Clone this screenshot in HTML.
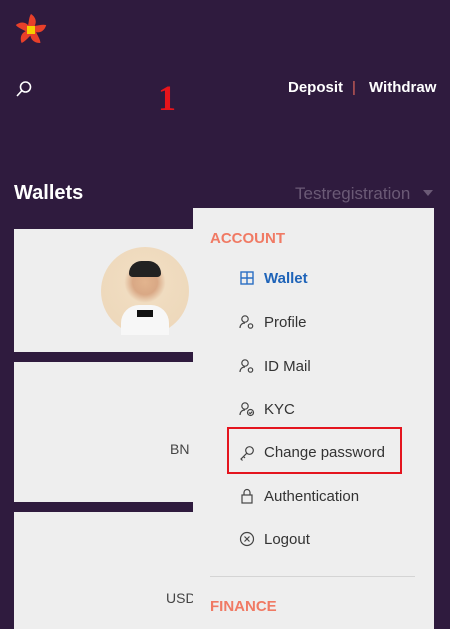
<!DOCTYPE html>
<html><head><style>
*{margin:0;padding:0;box-sizing:border-box}
html,body{width:450px;height:629px;overflow:hidden}
body{background:#2f1b3e;font-family:"Liberation Sans",sans-serif;position:relative}
.a{position:absolute}
.card{position:absolute;left:14px;width:200px;background:#eeeeee}
.menu{position:absolute;left:193px;top:208px;width:241px;height:421px;background:#eeeeee}
.it{position:absolute;left:71px;font-size:15px;color:#333;line-height:18px}
.ic{position:absolute;left:46px;width:16px;height:16px}
.hd{position:absolute;left:17px;font-size:15px;font-weight:bold;color:#f07a64}
</style></head><body>
<svg class="a" style="left:13px;top:12px" width="36" height="36" viewBox="0 0 36 36">
<g transform="translate(18,18)" fill="#e8402a">
<path d="M0-16 C6-12 6-6 2-2 L-3-4 C-2-9 -2-13 0-16Z"/>
<path transform="rotate(72)" d="M0-16 C6-12 6-6 2-2 L-3-4 C-2-9 -2-13 0-16Z"/>
<path transform="rotate(144)" d="M0-16 C6-12 6-6 2-2 L-3-4 C-2-9 -2-13 0-16Z"/>
<path transform="rotate(216)" d="M0-16 C6-12 6-6 2-2 L-3-4 C-2-9 -2-13 0-16Z"/>
<path transform="rotate(288)" d="M0-16 C6-12 6-6 2-2 L-3-4 C-2-9 -2-13 0-16Z"/>
<rect x="-4" y="-4" width="8" height="8" fill="#f5d000"/>
</g></svg>
<svg class="a" style="left:15px;top:80px" width="18" height="18" viewBox="0 0 18 18" fill="none" stroke="#fff" stroke-width="1.6"><circle cx="10.5" cy="7" r="5"/><path d="M7 10.5L2 16"/></svg>
<div class="a" style="left:158px;top:80px;color:#e8141b;font-size:36px;font-weight:bold;line-height:36px;font-family:'Liberation Serif',serif">1</div>
<div class="a" style="left:288px;top:79px;color:#fff;font-size:15px;font-weight:bold">Deposit</div>
<div class="a" style="left:352px;top:79px;color:#d9645a;font-size:15px">|</div>
<div class="a" style="left:369px;top:79px;color:#fff;font-size:15px;font-weight:bold">Withdraw</div>
<div class="a" style="left:14px;top:182px;color:#fff;font-size:20px;font-weight:bold">Wallets</div>
<div class="a" style="left:295px;top:184px;color:#6b5a76;font-size:17px">Testregistration</div>
<div class="a" style="left:423px;top:190px;border-left:5px solid transparent;border-right:5px solid transparent;border-top:6px solid #6b5a76"></div>
<div class="card" style="top:229px;height:123px"></div>
<div class="a" style="left:101px;top:247px;width:88px;height:88px;border-radius:50%;background:radial-gradient(circle at 50% 40%,#e2b48e 0,#d9a885 18%,#f0dcc0 30%,#ecd6b8 100%)"><div style="position:absolute;left:28px;top:14px;width:32px;height:16px;background:#222;border-radius:14px 14px 4px 4px"></div><div style="position:absolute;left:20px;top:58px;width:48px;height:30px;background:#f7f7f7;border-radius:18px 18px 0 0"></div><div style="position:absolute;left:36px;top:63px;width:16px;height:7px;background:#111"></div></div>
<div class="card" style="top:362px;height:140px"></div>
<div class="a" style="left:170px;top:441px;font-size:14px;color:#444">BN</div>
<div class="card" style="top:512px;height:117px"></div>
<div class="a" style="left:166px;top:590px;font-size:14px;color:#444">USD</div>
<div class="menu">
<div class="hd" style="top:22px">ACCOUNT</div>
<svg class="ic" style="top:62px" viewBox="0 0 16 16" fill="none" stroke="#2a6ec4" stroke-width="1.4"><rect x="2" y="2" width="12" height="12"/><path d="M8 2v12M2 8h12"/></svg>
<div class="it" style="top:62px;color:#1e63b8;font-weight:bold">Wallet</div>
<svg class="ic" style="top:106px" viewBox="0 0 16 16" fill="none" stroke="#444" stroke-width="1.2"><circle cx="6" cy="5" r="3.2"/><path d="M1 14c0-3 2-5 5-5"/><circle cx="11.5" cy="12" r="2.2"/></svg>
<div class="it" style="top:106px">Profile</div>
<svg class="ic" style="top:150px" viewBox="0 0 16 16" fill="none" stroke="#444" stroke-width="1.2"><circle cx="6" cy="5" r="3.2"/><path d="M1 14c0-3 2-5 5-5"/><circle cx="11.5" cy="12" r="2.2"/></svg>
<div class="it" style="top:150px">ID Mail</div>
<svg class="ic" style="top:193px" viewBox="0 0 16 16" fill="none" stroke="#444" stroke-width="1.2"><circle cx="6" cy="5" r="3.2"/><path d="M1 14c0-3 2-5 5-5"/><circle cx="11.5" cy="11.5" r="3"/><path d="M10 11.5l1.2 1.2 2-2"/></svg>
<div class="it" style="top:193px">KYC</div>
<div class="a" style="left:34px;top:219px;width:175px;height:47px;border:2px solid #e4141e"></div>
<svg class="ic" style="top:237px" viewBox="0 0 16 16" fill="none" stroke="#444" stroke-width="1.2"><circle cx="10.5" cy="5.5" r="3.8"/><path d="M7.8 8.2L2 14l1.5 1.5M4.5 11.5l1.5 1.5"/></svg>
<div class="it" style="top:236px">Change password</div>
<svg class="ic" style="top:280px" viewBox="0 0 16 16" fill="none" stroke="#444" stroke-width="1.2"><rect x="3" y="7" width="10" height="8"/><path d="M5 7V4.5a3 3 0 016 0V7"/></svg>
<div class="it" style="top:280px">Authentication</div>
<svg class="ic" style="top:323px" viewBox="0 0 16 16" fill="none" stroke="#444" stroke-width="1.2"><circle cx="8" cy="8" r="6.5"/><path d="M5.5 5.5l5 5M10.5 5.5l-5 5"/></svg>
<div class="it" style="top:323px">Logout</div>
<div class="a" style="left:17px;top:368px;width:205px;height:1px;background:#d4d4d4"></div>
<div class="hd" style="top:390px">FINANCE</div>
</div>
</body></html>
